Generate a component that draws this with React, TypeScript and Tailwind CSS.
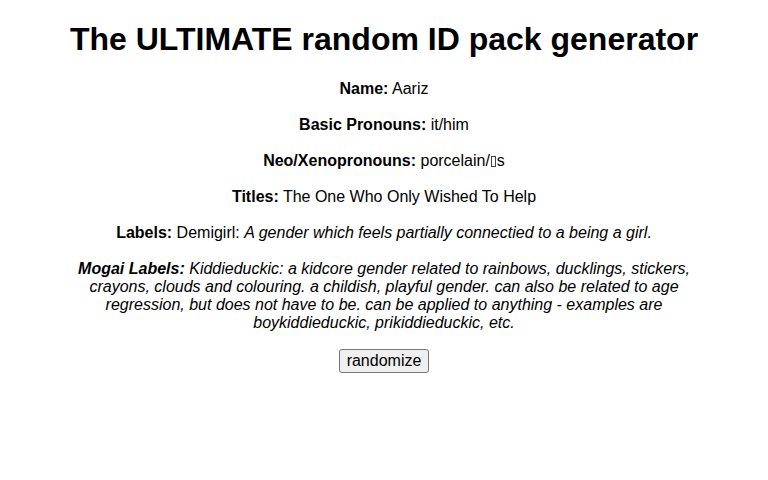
import React from "react";

// missing-glyph box as shown by the browser for an unsupported character
const Tofu = () => (
  <span
    aria-hidden="true"
    className="mx-[1px] inline-block h-[11px] w-[5px] border border-[#444] align-[-1px]"
  />
);

const rows: { label: string; value: React.ReactNode }[] = [
  { label: "Name:", value: "Aariz" },
  { label: "Basic Pronouns:", value: "it/him" },
  {
    label: "Neo/Xenopronouns:",
    value: (
      <>
        porcelain/
        <Tofu />s
      </>
    ),
  },
  { label: "Titles:", value: "The One Who Only Wished To Help" },
];

export default function App() {
  return (
    <div className="min-h-screen bg-white px-2 text-center text-black font-['Liberation_Sans',Arial,sans-serif]">
      <h1 className="pt-[21.44px] pb-[21.44px] text-[32px] font-bold leading-[36.8px]">
        The ULTIMATE random ID pack generator
      </h1>

      {rows.map((row) => (
        <p key={row.label} className="mb-[17.6px] text-base leading-[18.4px]">
          <b>{row.label}</b> {row.value}
        </p>
      ))}

      <p className="mb-[17.6px] text-base leading-[18.4px]">
        <b>Labels:</b> Demigirl:{" "}
        <i>A gender which feels partially connectied to a being a girl.</i>
      </p>

      <p className="mx-auto mb-[17.6px] max-w-[640px] text-base leading-[18px] italic">
        <b>Mogai Labels:</b> Kiddieduckic: a kidcore gender related to rainbows,
        ducklings, stickers, crayons, clouds and colouring. a childish, playful
        gender. can also be related to age regression, but does not have to be.
        can be applied to anything - examples are boykiddieduckic,
        prikiddieduckic, etc.
      </p>

      <button className="h-[24px] rounded-[3px] border border-[#767676] bg-[#efefef] px-[7px] text-base leading-[18.4px] text-black">
        randomize
      </button>
    </div>
  );
}
